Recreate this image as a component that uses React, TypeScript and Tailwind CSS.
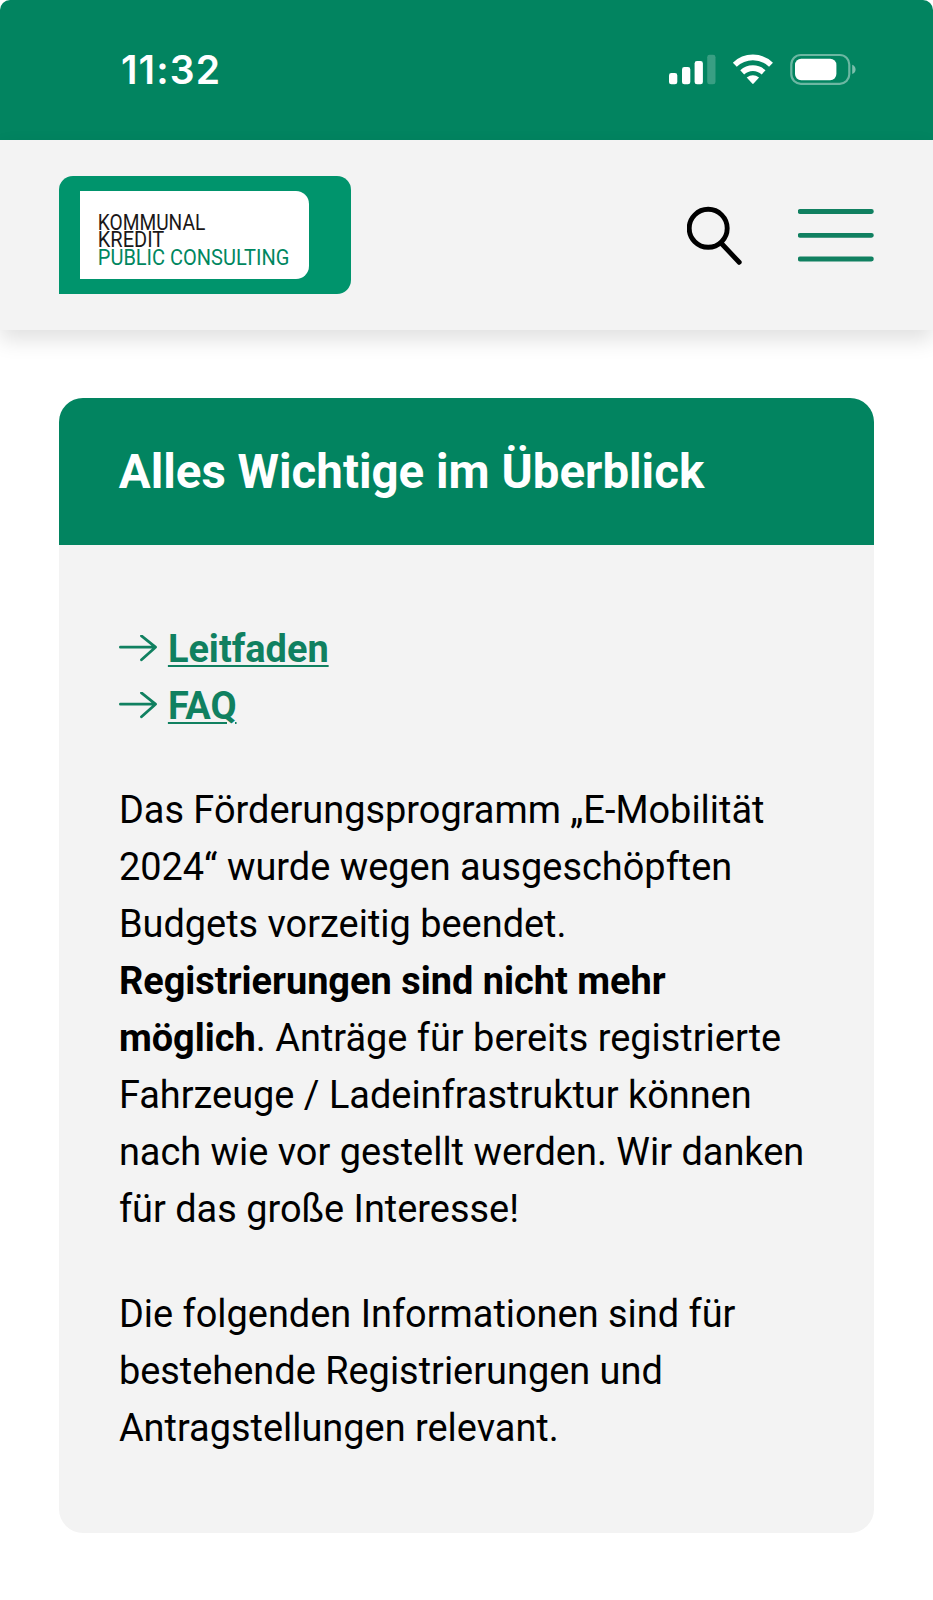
import type { ReactNode } from 'react';

function StatusIcons() {
  return (
    <svg className="h-[40px] w-[200px]" viewBox="660 50 200 40" fill="#fff">
      <rect x="669" y="73" width="8.3" height="11.3" rx="2.4" />
      <rect x="682" y="67" width="8.3" height="17.3" rx="2.4" />
      <rect x="694.6" y="61" width="8.3" height="23.3" rx="2.4" />
      <rect x="707.2" y="54.8" width="8.3" height="29.5" rx="2.4" opacity="0.22" />
      <g fill="none" stroke="#fff" strokeWidth="5.6">
        <path d="M734.8 64.7 A26 26 0 0 1 771 64.7" />
        <path d="M742.2 72.4 A15.5 15.5 0 0 1 763.6 72.4" />
      </g>
      <path d="M746.7 77.6 Q752.9 72.8 759.1 77.6 L753.6 83.6 Q752.9 84.2 752.2 83.6 Z" />
      <rect x="791.3" y="55" width="58" height="28.8" rx="9.5" fill="none" stroke="#fff" strokeWidth="2.2" opacity="0.42" />
      <rect x="795" y="58.8" width="41.4" height="21.4" rx="6.2" />
      <path d="M852.2 64.8 Q855.6 66.3 855.6 69.4 Q855.6 72.5 852.2 74 Z" opacity="0.48" />
    </svg>
  );
}

function Logo() {
  return (
    <div className="h-[118.5px] w-[291.3px] rounded-[14px] rounded-bl-none bg-[#00946c] pt-[15px] pl-[20.7px]">
      <div className="h-[88.5px] w-[229px] rounded-r-[13px] bg-white">
        <svg
          className="h-[89px] w-[229px] font-[Roboto,sans-serif] text-[21.8px]"
          viewBox="0 0 229 89"
        >
          <text x="17.8" y="38.8" textLength="107.5" lengthAdjust="spacingAndGlyphs" fill="#1a1718">
            KOMMUNAL
          </text>
          <text x="17.8" y="56" textLength="66.5" lengthAdjust="spacingAndGlyphs" fill="#1a1718">
            KREDIT
          </text>
          <text x="17.8" y="73.5" textLength="191.5" lengthAdjust="spacingAndGlyphs" fill="#00875f">
            PUBLIC CONSULTING
          </text>
        </svg>
      </div>
    </div>
  );
}

function ArrowLink({ children }: { children: ReactNode }) {
  return (
    <li className="flex h-[57px] items-center">
      <svg
        className="mr-[11px] h-[28px] w-[38px]"
        viewBox="0 0 38 28"
        fill="none"
        stroke="#108060"
        strokeWidth="2.8"
        strokeLinecap="round"
        strokeLinejoin="round"
      >
        <path d="M1.4 12.2H36.5M22.5 0.9 36.5 12.2 22.5 24.7" />
      </svg>
      <a href="#" className="font-bold text-[#108060] underline decoration-[2.4px] underline-offset-[2.5px]">
        {children}
      </a>
    </li>
  );
}

export default function App() {
  return (
    <div className="h-[1600px] w-[933px] overflow-hidden bg-white font-[Roboto,sans-serif] text-black">
      <div className="flex h-[140px] items-center justify-between rounded-t-[10px] bg-[#028460] pr-[73px] pl-[121px]">
        <time className="font-[Inter,sans-serif] text-[39px] font-semibold tracking-[1.1px] text-white">
          11:32
        </time>
        <StatusIcons />
      </div>
      <header className="flex h-[190px] items-center justify-between bg-[#f3f3f3] pr-[59.5px] pl-[59.4px] shadow-[0_10px_20px_rgba(0,0,0,0.12)]">
        <Logo />
        <div className="flex items-center">
          <svg
            className="mr-[55px] h-[60px] w-[56px]"
            viewBox="686.5 205 56 60"
            fill="none"
            stroke="#000"
            strokeWidth="4.9"
            strokeLinecap="round"
          >
            <circle cx="707.7" cy="228.3" r="19" />
            <path d="M721 243.5 738.7 262.3" />
          </svg>
          <svg
            className="h-[60px] w-[76px]"
            viewBox="798 205 76 60"
            stroke="#108060"
            strokeWidth="4.8"
            strokeLinecap="round"
          >
            <path d="M800.2 211.5H871.4M800.2 235.3H871.4M800.2 259H871.4" />
          </svg>
        </div>
      </header>
      <main className="px-[59.4px] pt-[68px]">
        <section className="h-[1135.4px] overflow-hidden rounded-[24px] bg-[#f3f3f3]">
          <h1 className="flex h-[147px] items-center bg-[#028460] pt-[3px] pl-[59.4px] text-[47.45px] font-bold text-white">
            Alles Wichtige im Überblick
          </h1>
          <div className="px-[59.5px] pt-[75.5px] text-[37.92px] leading-[57px]">
            <ul>
              <ArrowLink>Leitfaden</ArrowLink>
              <ArrowLink>FAQ</ArrowLink>
            </ul>
            <p className="mt-[47.5px] whitespace-nowrap">
              Das Förderungsprogramm „E-Mobilität
              <br />
              2024“ wurde wegen ausgeschöpften
              <br />
              Budgets vorzeitig beendet.
              <br />
              <strong className="font-bold">
                Registrierungen sind nicht mehr
                <br />
                möglich
              </strong>
              . Anträge für bereits registrierte
              <br />
              Fahrzeuge / Ladeinfrastruktur können
              <br />
              nach wie vor gestellt werden. Wir danken
              <br />
              für das große Interesse!
            </p>
            <p className="mt-[47.5px] whitespace-nowrap">
              Die folgenden Informationen sind für
              <br />
              bestehende Registrierungen und
              <br />
              Antragstellungen relevant.
            </p>
          </div>
        </section>
      </main>
    </div>
  );
}
